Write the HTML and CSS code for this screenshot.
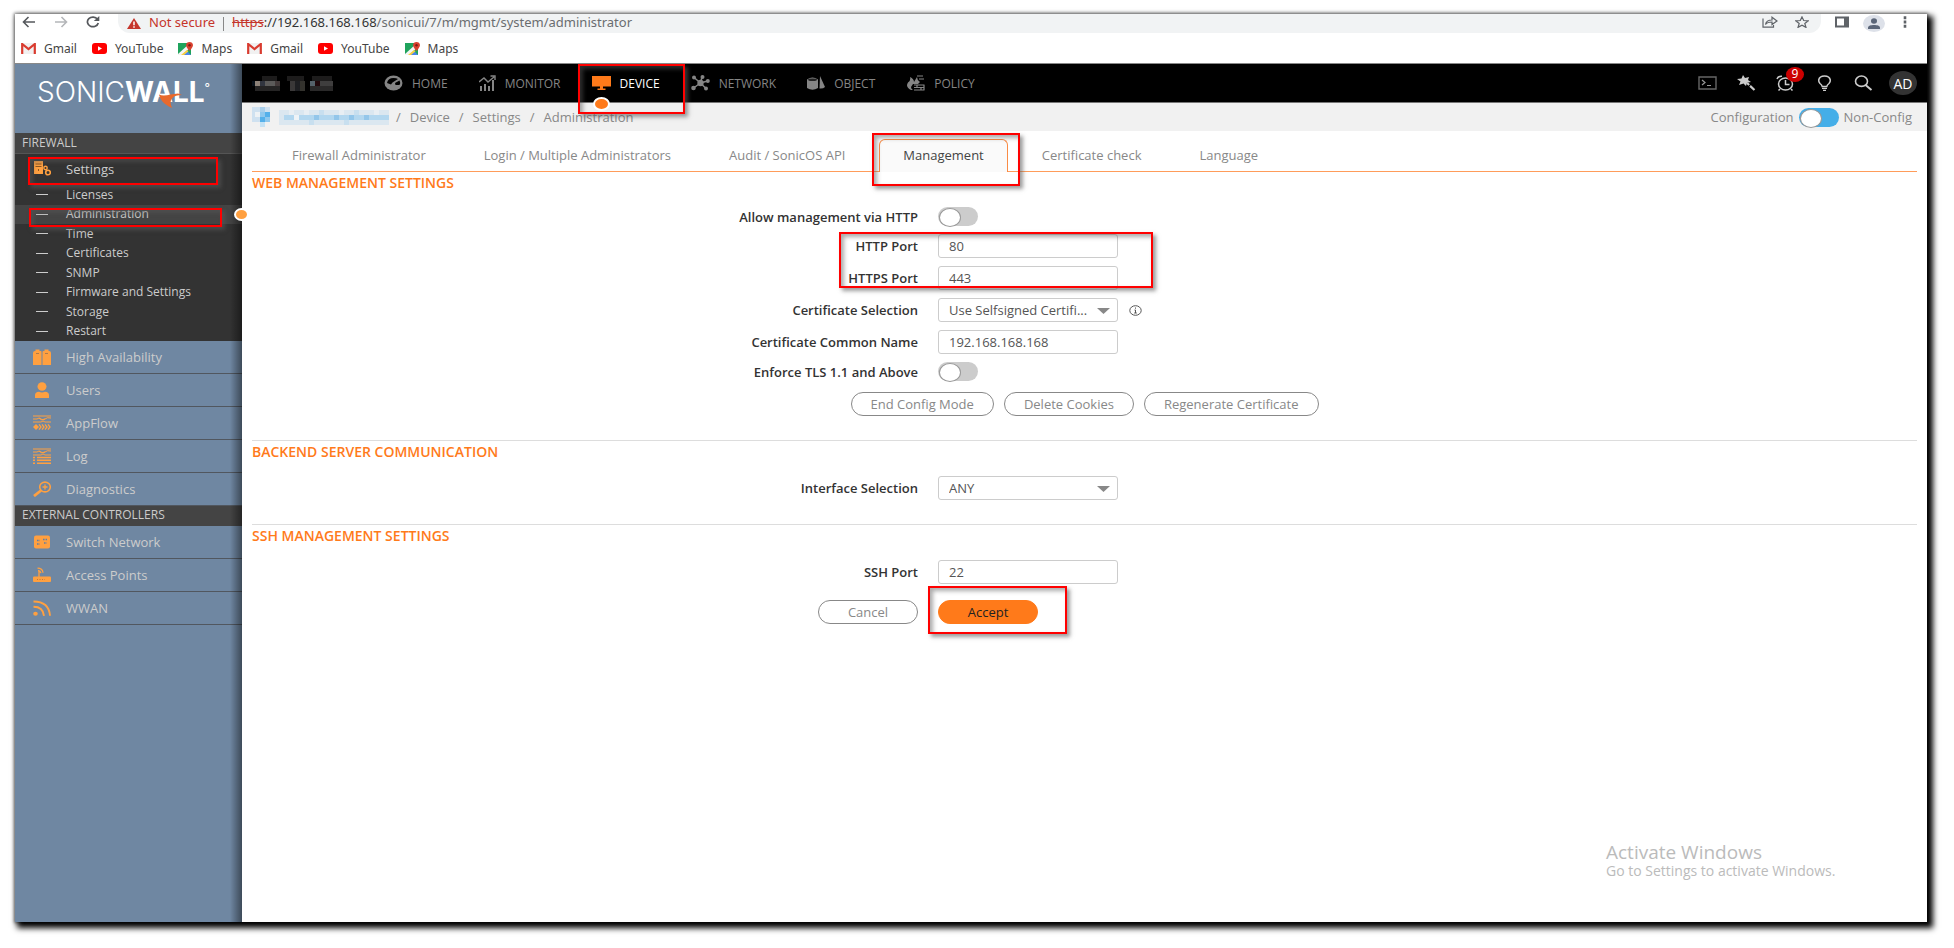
FILE: index.html
```html
<!DOCTYPE html>
<html lang="en">
<head>
<meta charset="utf-8">
<title>SonicWall - Administration</title>
<link rel="stylesheet" href="styles.css">
</head>
<body>
<div class="window">
  <header class="browser">
    <div class="toolbar">
      <button class="tool" aria-label="Back"><svg width="14" height="12" viewBox="0 0 14 12"><path d="M13 6H1.500M6.500 1L1.500 6l5 5" fill="none" stroke="#55585c" stroke-width="1.600"/></svg></button>
      <button class="tool" aria-label="Forward"><svg width="14" height="12" viewBox="0 0 14 12"><path d="M1 6h11.500M7.500 1l5 5-5 5" fill="none" stroke="#b4b6b9" stroke-width="1.600"/></svg></button>
      <button class="tool" aria-label="Reload"><svg width="14" height="12" viewBox="0 0 14 12"><path d="M11.500 3.200A5.500 4.800 0 1 0 12.300 7" fill="none" stroke="#55585c" stroke-width="1.700"/><path d="M13.300 0v5H7.800z" fill="#55585c"/></svg></button>
      <div class="address">
        <svg width="14" height="11" viewBox="0 0 14 11"><path d="M7 0l7 11H0z" fill="#c5352b"/><path d="M7 3.500v3.700M7 8.300v1.400" stroke="#fff" stroke-width="1.500"/></svg>
        <span class="insecure">Not secure</span>
        <span class="bar"></span>
        <span class="url"><s>https</s>://192.168.168.168<span class="path">/sonicui/7/m/mgmt/system/administrator</span></span>
        <button class="tool share" aria-label="Share"><svg width="16" height="12" viewBox="0 0 16 12"><path d="M1 2.500v8.700h10.500V9M3.500 8.500C4 5.500 6 4 10 4V1.200L15 5l-5 3.500V6C7 6 5 6.500 3.500 8.500z" fill="none" stroke="#5f6368" stroke-width="1.200"/></svg></button>
        <button class="tool" aria-label="Bookmark"><svg width="14" height="12" viewBox="0 0 14 12"><path d="M7 .9l1.700 3.600 4.600.3-3.500 2.600 1.200 4L7 9.200l-4 2.200 1.200-4L.7 4.800l4.600-.3z" fill="none" stroke="#5f6368" stroke-width="1.200"/></svg></button>
      </div>
      <button class="tool panel" aria-label="Side panel"><svg width="14" height="12" viewBox="0 0 14 12"><path d="M1 1.500h12v9H1z" fill="#fff" stroke="#5f6368" stroke-width="2"/><path d="M9 1h4v10H9z" fill="#5f6368"/></svg></button>
      <button class="tool profile" aria-label="Profile"><svg width="14" height="11" viewBox="0 0 14 11"><ellipse cx="7" cy="3" rx="3" ry="2.800" fill="#5b6679"/><path d="M1 11V9.500C1 6.200 13 6.200 13 9.500V11z" fill="#5b6679"/></svg></button>
      <button class="tool" aria-label="Menu"><svg width="4" height="12" viewBox="0 0 4 12"><path d="M2 .3v3M2 4.500v3M2 8.700v3" stroke="#5f6368" stroke-width="2.600"/></svg></button>
    </div>
    <nav class="bookmarks">
      <a href="#"><svg width="15" height="11"><use href="#gmail"/></svg>Gmail</a>
      <a href="#"><svg width="15" height="11"><use href="#youtube"/></svg>YouTube</a>
      <a href="#"><svg width="15" height="13"><use href="#maps"/></svg>Maps</a>
      <a href="#"><svg width="15" height="11"><use href="#gmail"/></svg>Gmail</a>
      <a href="#"><svg width="15" height="11"><use href="#youtube"/></svg>YouTube</a>
      <a href="#"><svg width="15" height="13"><use href="#maps"/></svg>Maps</a>
    </nav>
  </header>

  <div class="app">
    <aside class="sidebar">
      <div class="logo">
        <span class="thin">SONIC</span><span class="heavy">WALL</span><sup>°</sup>
        <svg class="swoosh" width="24" height="15" viewBox="0 0 24 15"><path d="M20 .5L24 2C15 2 10 6 14 15 5 11 2 6 1 1.500 6 4 13 1 20 .5z" fill="#e8692c"/></svg>
      </div>
      <h2 class="group">FIREWALL</h2>
      <div class="open">
        <a class="entry" href="#"><svg width="18" height="18" viewBox="0 0 18 18"><path d="M1 1h9v13H1z" fill="#ffa040"/><path d="M2.500 4h6M2.500 6.500h6M5.500 9v2" stroke="#8a5520" stroke-width="1"/><circle cx="12.500" cy="8" r="1.700" fill="none" stroke="#ffa040" stroke-width="1.400"/><circle cx="15" cy="12.500" r="2.300" fill="none" stroke="#ffa040" stroke-width="1.600"/></svg>Settings<span class="mark mark-settings"></span></a>
        <ul class="links">
          <li><a href="#">Licenses</a></li>
          <li class="current"><a href="#">Administration</a><span class="mark mark-admin"></span><span class="dot"></span></li>
          <li><a href="#">Time</a></li>
          <li><a href="#">Certificates</a></li>
          <li><a href="#">SNMP</a></li>
          <li><a href="#">Firmware and Settings</a></li>
          <li><a href="#">Storage</a></li>
          <li><a href="#">Restart</a></li>
        </ul>
      </div>
      <a class="entry" href="#"><svg width="18" height="16" viewBox="0 0 18 16"><path d="M0 4q0-2 2-2h.5V.5h4V2H8q.5 0 .5 1v13H0zM9.500 3q0-1 1-1h1V.5h4V2h.5q2 0 2 2v12H9.500z" fill="#ffa040"/><path d="M3 4.500h3M12 4.500h3" stroke="#b07a4a"/></svg>High Availability</a>
      <a class="entry" href="#"><svg width="18" height="16" viewBox="0 0 18 16"><ellipse cx="9" cy="4.500" rx="4.500" ry="4.300" fill="#ffa040"/><path d="M2 16v-3q0-3 4-3.200 3 1.500 6 0 4 .2 4 3.200v3z" fill="#ffa040"/></svg>Users</a>
      <a class="entry" href="#"><svg width="18" height="16" viewBox="0 0 18 16"><path d="M0 1h18M0 4h4q2-2 4 0t4 0 6-1M0 7h8q2-2 4 0h6M6 3q2 3 6 1" fill="none" stroke="#ffa040" stroke-width="1"/><path d="M0 12l3-3 3 3-3 3z" fill="#ffa040"/><path d="M6 9.300l2 2.700-2 2.700M9 9.300l2 2.700-2 2.700M12 9.300l2 2.700-2 2.700M15 9.300l2 2.700-2 2.700" fill="none" stroke="#ffa040" stroke-width="1.300"/></svg>AppFlow</a>
      <a class="entry" href="#"><svg width="18" height="16" viewBox="0 0 18 16"><path d="M0 1h18M0 4h4q2-2 4 0t4 0 6-1M0 7h8q2-2 4 0h6M6 3q2 3 6 1" fill="none" stroke="#ffa040" stroke-width="1"/><path d="M0 9.500h2M4 9.500h14M0 12.300h2M4 12.300h14M0 15.200h2M4 15.200h14" stroke="#ffa040" stroke-width="1.400"/></svg>Log</a>
      <a class="entry" href="#"><svg width="18" height="16" viewBox="0 0 18 16"><ellipse cx="12" cy="6" rx="5.300" ry="4.900" fill="none" stroke="#ffa040" stroke-width="1.600"/><path d="M12 3.500v5M9.500 6h5" stroke="#ffa040" stroke-width="1.300"/><path d="M8 9.500L1 15" stroke="#ffa040" stroke-width="2.800"/></svg>Diagnostics</a>
      <h2 class="group external">EXTERNAL CONTROLLERS</h2>
      <a class="entry" href="#"><svg width="18" height="16" viewBox="0 0 18 16"><rect x="1" y="1.500" width="16" height="13" rx="2" fill="#ffa040"/><path d="M4 6.500h3M4 10h3M10 5.500h4M11 9h3" stroke="#5e7ea6" stroke-width="1.600" stroke-dasharray="1.600 1"/></svg>Switch Network</a>
      <a class="entry" href="#"><svg width="18" height="16" viewBox="0 0 18 16"><path d="M0 10.500q0-1 1-1h16q1 0 1 1V14q0 1-1 1H1q-1 0-1-1z" fill="#ffa040"/><path d="M6 4v6M4.500 1.200q5 0 5.500 4.500M5 3.500q2.500.3 3 2.700" fill="none" stroke="#ffa040" stroke-width="1.300"/><path d="M4 12.500h8" stroke="#bf7a3c" stroke-dasharray="1 1.500"/></svg>Access Points</a>
      <a class="entry" href="#"><svg width="18" height="16" viewBox="0 0 18 16"><ellipse cx="2.500" cy="13.800" rx="2.300" ry="2" fill="#ffa040"/><path d="M.5 6.800q9.500 0 10.500 9M.5 1.500q15.500 0 16.500 14.300" fill="none" stroke="#ffa040" stroke-width="1.900"/></svg>WWAN</a>
    </aside>

    <div class="page">
      <nav class="topnav">
        <svg class="model" width="81" height="15" viewBox="0 0 81 15" shape-rendering="crispEdges"><path d="M10 0h15v5H10zM35 0h17v5H35zM60 0h20v5H60z" fill="#1d1c1c"/><path d="M0 5h3v5H0z" fill="#081018"/><path d="M3 5h5v5H3z" fill="#8d8278"/><path d="M8 5h5v10H8z" fill="#31353f"/><path d="M13 5h10v5H13z" fill="#5c5b5a"/><path d="M23 5h5v5h-5z" fill="#433a3a"/><path d="M3 10h25v5H3z" fill="#252424"/><path d="M38 5h5v10h-5z" fill="#3a3838"/><path d="M43 5h5v10h-5z" fill="#1e1f22"/><path d="M48 5h5v10h-5z" fill="#33322d"/><path d="M58 5h5v5h-5z" fill="#55626a"/><path d="M63 5h5v5h-5z" fill="#21090c"/><path d="M68 5h15v5H68z" fill="#3f3e3e"/><path d="M58 10h23v5H58z" fill="#2a2929"/></svg>
        <a href="#"><svg width="19" height="16" viewBox="0 0 19 16"><ellipse cx="9.500" cy="8" rx="9" ry="7.600" fill="#858585"/><path d="M3 8Q4 3 9.500 3q3 0 4.500 1L8.500 7.500 7 9.500zM15.500 5.500Q17 8 15.500 10h-4l-.5-2z" fill="#000"/></svg>HOME</a>
        <a href="#"><svg width="17" height="16" viewBox="0 0 17 16"><path d="M2 16v-5M6 16V9M10 16v-5M14 16V5" stroke="#858585" stroke-width="2"/><path d="M0 7l5-4 4 4 6-5M11.500 1H16v4" fill="none" stroke="#858585" stroke-width="1.400"/></svg>MONITOR</a>
        <a class="active" href="#"><svg width="19" height="14" viewBox="0 0 19 14"><path d="M0 0h19v10.500H0zM8 10h3v2.500h2.500V14h-8v-1.500H8z" fill="#ff7a1a"/></svg>DEVICE<span class="dot"></span><span class="mark mark-device"></span></a>
        <a href="#"><svg width="19" height="16" viewBox="0 0 19 16"><path d="M3 2.500L9.500 8M11 2l-1.500 6M16.500 6l-7 2M2.500 13l7-5M15 13.500L9.500 8" stroke="#858585" stroke-width="1.500"/><g fill="#858585"><circle cx="9.500" cy="8" r="3.200"/><circle cx="3" cy="2.500" r="2"/><circle cx="11.500" cy="2" r="2"/><circle cx="16.800" cy="6" r="2"/><circle cx="2.500" cy="13" r="2.300"/><circle cx="15" cy="13.500" r="2"/></g></svg>NETWORK</a>
        <a href="#"><svg width="18" height="14" viewBox="0 0 18 14"><path d="M0 3.500Q5.500-.5 11 3.500V12q-5.500 3.500-11 0z" fill="#858585"/><ellipse cx="5.500" cy="3.700" rx="4.500" ry="1.300" fill="#242424"/><path d="M13 0l5 11q-2 2-5.500 1.500z" fill="#858585"/></svg>OBJECT</a>
        <a href="#"><svg width="19" height="16" viewBox="0 0 19 16"><path d="M5 15Q-1 12 2 7.500 5 6 4 2q4 2 4 5l3-5q0 3 3 5l-2 2-5 0-2 3q0 2 2 3z" fill="#858585"/><path d="M8 10h10.500M8 12.500h10.500M8 15h10.500M11 10v2.500M15 12.500V15M18 10v5M11 1h6M13 4h5" stroke="#858585" stroke-width="1.200"/></svg>POLICY</a>
        <div class="tools">
          <button aria-label="Console"><svg width="19" height="14" viewBox="0 0 19 14"><path d="M1 1h17v12H1z" fill="none" stroke="#666" stroke-width="1.400"/><path d="M4 4l3 2.500L4 9M9 9.500h4" fill="none" stroke="#999" stroke-width="1.200"/></svg></button>
          <button aria-label="Wizard"><svg width="19" height="16" viewBox="0 0 19 16"><path d="M6 0l2 3 4-1-1 3 3 2-4 .8L9 11 6.500 8.500 2 10l1.500-3.500L0 4l4.500-.5z" fill="#ccc"/><path d="M10 8l7.500 7" stroke="#ccc" stroke-width="2.200" stroke-dasharray="3 1.200 9"/></svg></button>
          <button class="alerts" aria-label="Alerts"><svg width="19" height="16" viewBox="0 0 19 16"><ellipse cx="9.500" cy="9" rx="7" ry="6" fill="none" stroke="#ccc" stroke-width="1.500"/><path d="M9.500 5v4.500h4M1 4q1-3 5-2.700M4 14l-1.500 1.500M15 14l1.500 1.500" fill="none" stroke="#ccc" stroke-width="1.500"/></svg><span class="badge">9</span></button>
          <button aria-label="Tips"><svg width="19" height="16" viewBox="0 0 19 16"><path d="M7.200 11.500Q7 10 5 8.500 3.500 7 3.700 5 4.500 1 9.500 1t5.800 4q.2 2-1.300 3.500-2 1.500-2.200 3z" fill="none" stroke="#ccc" stroke-width="1.500"/><path d="M7 13.300h5M8 15.300h3" stroke="#ccc" stroke-width="1.300"/></svg></button>
          <button aria-label="Search"><svg width="19" height="16" viewBox="0 0 19 16"><ellipse cx="7.500" cy="6.200" rx="6" ry="5.200" fill="none" stroke="#ccc" stroke-width="1.600"/><path d="M11.500 10l6 5" stroke="#ccc" stroke-width="2"/></svg></button>
          <button class="user">AD</button>
        </div>
      </nav>

      <div class="crumbs">
        <svg width="18" height="20" viewBox="0 0 18 20" shape-rendering="crispEdges"><path d="M0 0h3v15H0zM3 0h5v5H3zM3 10h5v5H3z" fill="#cfe1f0"/><path d="M8 0h5v5H8z" fill="#a9cfeb"/><path d="M13 0h5v5h-5z" fill="#cfe1f0"/><path d="M3 5h5v5H3z" fill="#eef2f5"/><path d="M8 5h5v5H8zM13 10h5v5h-5z" fill="#8fc8ee"/><path d="M13 5h5v5h-5zM8 10h5v5H8z" fill="#54b0ea"/><path d="M8 15h5v5H8z" fill="#c4e2f5"/></svg>
        <svg class="host" width="110" height="15" viewBox="0 0 110 15" shape-rendering="crispEdges"><path d="M0 0h110v15H0z" fill="#dbe7f0"/><path d="M5 5h105v5H5z" fill="#b3d7ef"/><path d="M15 5h5v5h-5z" fill="#eef3f7"/><path d="M35 5h5v5h-5zM55 5h5v5h-5zM70 5h5v5h-5zM85 5h5v5h-5z" fill="#93c6ea"/><path d="M10 0h5v5h-5zM25 0h5v5h-5zM60 0h5v5h-5zM95 0h5v5h-5z" fill="#e8eef3"/><path d="M40 0h5v5h-5zM75 0h5v5h-5zM30 10h5v5h-5zM65 10h5v5h-5z" fill="#c8dfef"/></svg>
        <span>/</span><a href="#">Device</a><span>/</span><a href="#">Settings</a><span>/</span><span>Administration</span>
        <label class="mode">Configuration<input class="switch blue" type="checkbox" role="switch">Non-Config</label>
      </div>

      <main class="content">
        <nav class="tabs">
          <a href="#">Firewall Administrator</a>
          <a href="#">Login / Multiple Administrators</a>
          <a href="#">Audit / SonicOS API</a>
          <a class="selected" href="#">Management<span class="mark mark-tab"></span></a>
          <a href="#">Certificate check</a>
          <a href="#">Language</a>
        </nav>

        <section>
          <h3>WEB MANAGEMENT SETTINGS</h3>
          <div class="form">
            <label for="allow">Allow management via HTTP</label>
            <input id="allow" class="switch" type="checkbox" role="switch">
            <label for="http">HTTP Port</label>
            <div class="cell"><input id="http" class="box" type="text" value="80"><span class="mark mark-ports"></span></div>
            <label for="https">HTTPS Port</label>
            <input id="https" class="box" type="text" value="443">
            <label for="cert">Certificate Selection</label>
            <div class="cell"><select id="cert" class="box"><option>Use Selfsigned Certifi...</option></select><svg class="arrow" width="13" height="6" viewBox="0 0 13 6"><path d="M0 0h13L6.500 6z" fill="#888"/></svg><svg width="13" height="11" viewBox="0 0 13 11"><ellipse cx="6.500" cy="5.500" rx="5.700" ry="4.800" fill="none" stroke="#555"/><path d="M6.500 2.500v1.200M5.500 5h1v3M5.200 8h2.600" fill="none" stroke="#555"/></svg></div>
            <label for="cn">Certificate Common Name</label>
            <input id="cn" class="box" type="text" value="192.168.168.168">
            <label for="tls">Enforce TLS 1.1 and Above</label>
            <input id="tls" class="switch" type="checkbox" role="switch">
          </div>
          <div class="buttons">
            <button class="pill">End Config Mode</button>
            <button class="pill">Delete Cookies</button>
            <button class="pill">Regenerate Certificate</button>
          </div>
        </section>

        <section>
          <h3>BACKEND SERVER COMMUNICATION</h3>
          <div class="form">
            <label for="iface">Interface Selection</label>
            <div class="cell"><select id="iface" class="box"><option>ANY</option></select><svg class="arrow" width="13" height="6" viewBox="0 0 13 6"><path d="M0 0h13L6.500 6z" fill="#888"/></svg></div>
          </div>
        </section>

        <section>
          <h3>SSH MANAGEMENT SETTINGS</h3>
          <div class="form">
            <label for="ssh">SSH Port</label>
            <input id="ssh" class="box" type="text" value="22">
          </div>
          <div class="form actions">
            <button class="pill cancel">Cancel</button>
            <div class="cell"><button class="pill accept">Accept</button><span class="mark mark-accept"></span></div>
          </div>
        </section>
      </main>
    </div>
  </div>
  <div class="watermark"><p class="big">Activate Windows</p><p>Go to Settings to activate Windows.</p></div>
</div>

<svg class="defs" aria-hidden="true">
  <symbol id="gmail" viewBox="0 0 15 11"><path d="M1 0h13v11H1z" fill="#f1f1f1"/><path d="M1.200 11V1l6.300 5 6.300-5v10" fill="none" stroke="#d93b2f" stroke-width="2.200"/></symbol>
  <symbol id="youtube" viewBox="0 0 15 11"><rect width="15" height="11" rx="3" fill="#f00"/><path d="M6 3.200v4.600l4-2.300z" fill="#fff"/></symbol>
  <symbol id="maps" viewBox="0 0 15 13"><path d="M0 1h13v12H0z" fill="#1fa35c"/><path d="M0 12L11 2l2 0v3L4 13H0z" fill="#f4f4f4"/><path d="M5 13l4-4 4 4z" fill="#4a86ec"/><path d="M3 13l6-5 1.500 1.200L6 13z" fill="#f9cf3f"/><path d="M11.500 9Q8 5 8 3q.4-3 3.500-3T15 3q0 2-3.500 6z" fill="#d9402f"/><circle cx="11.500" cy="3.200" r="1.200" fill="#7c1c14"/></symbol>
</svg>
</body>
</html>
```

FILE: styles.css
```css
* { box-sizing: border-box; }

body {
  margin: 0;
  min-height: 100vh;
  padding: 14px 27px 26px 15px;
  display: flex;
  background: #fff;
  font-family: "Open Sans", "Noto Sans", sans-serif;
  font-size: 13px;
  color: #444;
}

a { color: inherit; text-decoration: none; }
h2, h3, p, ul { margin: 0; padding: 0; font-weight: 400; }
ul { list-style: none; }
button { padding: 0; border: 0; background: none; font: inherit; color: inherit; }
svg { flex: none; display: block; }
.defs { position: absolute; width: 0; height: 0; }

.window {
  position: relative;
  flex: 1;
  display: flex;
  flex-direction: column;
  background: #fff;
  box-shadow: 4px 4px 6px 2px #000, 0 0 3px 1px #888;
}

/* browser chrome */
.browser {
  position: relative;
  background: #fff;
  border-bottom: 1px solid #888;
  font-family: "Noto Sans", sans-serif;
}
.toolbar {
  display: flex;
  align-items: center;
  gap: 18px;
  height: 19px;
  padding: 0 20px 0 7px;
}
.tool { display: grid; place-items: center; padding-bottom: 3px; }
.address {
  flex: 1;
  display: flex;
  align-items: center;
  height: 19px;
  padding: 0 12px 0 9px;
  border-radius: 0 0 12px 12px;
  background: #f1f3f4;
  line-height: 16px;
}
.address > span { padding-bottom: 3px; }
.insecure { margin-left: 8px; color: #c5352b; }
.bar { width: 1px; height: 14px; margin: 0 8px; background: #888; }
.url { color: #333; }
.url s { color: #c5352b; }
.path { color: #6a6d70; }
.share { margin: 0 17px 0 auto; }
.panel { margin: 0 -4px; }
.profile { width: 22px; height: 17px; padding: 0; border-radius: 50%; background: #dde1e9; }
.bookmarks {
  display: flex;
  align-items: center;
  gap: 15px;
  height: 30px;
  padding: 0 6px;
  font-size: 12px;
}
.bookmarks a { display: flex; align-items: center; gap: 8px; }

.app { flex: 1; display: flex; }

/* sidebar */
.sidebar {
  position: relative;
  z-index: 1;
  width: 227px;
  background: #6f87a2;
  color: #ccc;
}
.sidebar::after {
  content: "";
  position: absolute;
  inset: 0 0 0 auto;
  width: 12px;
  background: linear-gradient(to right, transparent, rgba(0, 0, 0, .45));
}
.logo {
  position: relative;
  display: flex;
  align-items: flex-start;
  height: 70px;
  padding: 12px 0 0 22px;
  border-bottom: 1px solid #444;
  font-family: Inter, sans-serif;
  font-size: 28px;
  line-height: 32px;
  color: #fff;
}
.thin { font-weight: 300; }
.heavy { font-weight: 700; }
.logo sup { font-size: 12px; line-height: 24px; }
.swoosh { position: absolute; left: 143px; top: 29px; }
.group {
  height: 19px;
  padding-left: 7px;
  background: #444;
  font-size: 12px;
  line-height: 18px;
}
.external { height: 20px; }
.open { background: #333; }
.entry {
  position: relative;
  display: flex;
  align-items: center;
  gap: 15px;
  height: 33px;
  padding: 0 18px;
  border-bottom: 1px solid #51575f;
}
.open .entry { height: 32px; padding-bottom: 2px; border: 0; border-top: 1px solid #555; }
.links { display: flex; flex-direction: column; height: 156px; font-size: 12px; }
.links li {
  position: relative;
  flex: 1;
  display: flex;
  align-items: center;
  padding-left: 21px;
  line-height: 18px;
}
.links li::before { content: ""; width: 12px; height: 1px; margin-right: 18px; background: #ccc; }
.links .current { background: #444; }
.dot {
  position: absolute;
  z-index: 2;
  width: 15px;
  height: 13px;
  border: 2px solid #fff;
  border-radius: 50%;
  background: #ff7a1a;
}
.links .dot { right: -7px; top: 3px; background: #ffa040; }

/* top navigation */
.page { flex: 1; display: flex; flex-direction: column; }
.topnav {
  display: flex;
  align-items: center;
  gap: 31px;
  height: 39px;
  padding: 0 10px;
  border-bottom: 1px solid #777;
  background: #000;
  color: #858585;
  font-size: 12px;
}
.model { margin-right: 20px; }
.topnav a { position: relative; display: flex; align-items: center; gap: 9px; }
.topnav .active { color: #fff; }
.topnav .dot { left: 1px; bottom: -19px; width: 17px; height: 14px; }
.tools { display: flex; align-items: center; gap: 20px; margin-left: auto; }
.alerts { position: relative; }
.badge {
  position: absolute;
  left: 10px;
  top: -8px;
  width: 18px;
  height: 15px;
  border-radius: 50%;
  background: #c00;
  color: #fff;
  font-size: 12px;
  line-height: 14px;
}
.tools .user {
  width: 28px;
  height: 24px;
  margin-left: -4px;
  border-radius: 50%;
  background: #333;
  color: #fff;
  font-size: 14px;
}

.crumbs {
  display: flex;
  align-items: center;
  gap: 9px;
  height: 28px;
  padding: 0 15px 0 10px;
  background: #f1f1f1;
  color: #888;
}
.host { margin-right: -2px; }
.mode { display: flex; align-items: center; gap: 5px; margin-left: auto; }

/* controls */
.switch {
  appearance: none;
  width: 40px;
  height: 19px;
  margin: 0;
  border-radius: 10px;
  background: #ccc;
}
.switch::before {
  content: "";
  display: block;
  width: 20px;
  height: 17px;
  margin: 1px;
  border: 1px solid #999;
  border-radius: 50%;
  background: #fff;
}
.blue { background: #45aee8; }
.box {
  appearance: none;
  width: 180px;
  height: 24px;
  padding: 0 10px;
  border: 1px solid #ccc;
  border-radius: 3px;
  background: #fff;
  color: #555;
  font: inherit;
}
.pill {
  height: 24px;
  padding: 0 19px;
  border: 1px solid #888;
  border-radius: 12px;
  background: #fff;
  color: #888;
}
.cancel, .accept { width: 100px; }
.accept { border-color: #ff7a1a; background: #ff7a1a; color: #222; }

/* content */
.content { flex: 1; padding: 0 10px; }
.tabs {
  display: flex;
  align-items: flex-end;
  height: 41px;
  padding-left: 11px;
  border-bottom: 1px solid #ff9c5a;
  color: #888;
}
.tabs a {
  position: relative;
  height: 33px;
  margin: 0 5px -1px;
  padding: 0 23px;
  border: 1px solid transparent;
  border-bottom: 0;
  border-radius: 6px 6px 0 0;
  line-height: 31px;
}
.tabs .selected { border-color: #f98b45; background: #fafafa; color: #444; }

section { padding-bottom: 24px; border-bottom: 1px solid #ddd; }
section:last-child { border: 0; }
h3 { margin-bottom: 13px; font-size: 14px; font-weight: 600; line-height: 22px; color: #ff7a1a; }
.form {
  display: grid;
  grid-template-columns: 40% 1fr;
  gap: 8px 20px;
  align-items: center;
}
.form label { justify-self: end; font-weight: 600; line-height: 18px; color: #333; }
.form > .pill { justify-self: end; }
.cell { position: relative; display: flex; align-items: center; gap: 11px; }
.arrow { position: absolute; left: 159px; top: 10px; }
.buttons { display: flex; justify-content: center; gap: 10px; margin-top: 11px; }
.actions { margin-top: 16px; }

/* red callout frames */
.mark {
  position: absolute;
  z-index: 3;
  border: 2px solid #f00;
  box-shadow: 3px 3px 4px rgba(90, 90, 90, .6), inset 3px 3px 4px rgba(90, 90, 90, .5);
  pointer-events: none;
}
.mark-settings { left: 13px; top: 3px; width: 190px; height: 28px; }
.mark-admin { left: 14px; top: 3px; width: 193px; height: 19px; }
.mark-device { left: -14px; top: -11px; width: 107px; height: 50px; }
.mark-tab { left: -8px; top: -7px; width: 148px; height: 53px; }
.mark-ports { left: -99px; top: -2px; width: 314px; height: 56px; }
.mark-accept { left: -10px; top: -14px; width: 139px; height: 48px; }

.watermark {
  position: absolute;
  right: 84px;
  bottom: 41px;
  width: 237px;
  color: #bbb;
  font-size: 14px;
  line-height: 20px;
}
.watermark .big { font-size: 19px; line-height: 26px; }
.watermark p + p { margin-top: -4px; }
```
